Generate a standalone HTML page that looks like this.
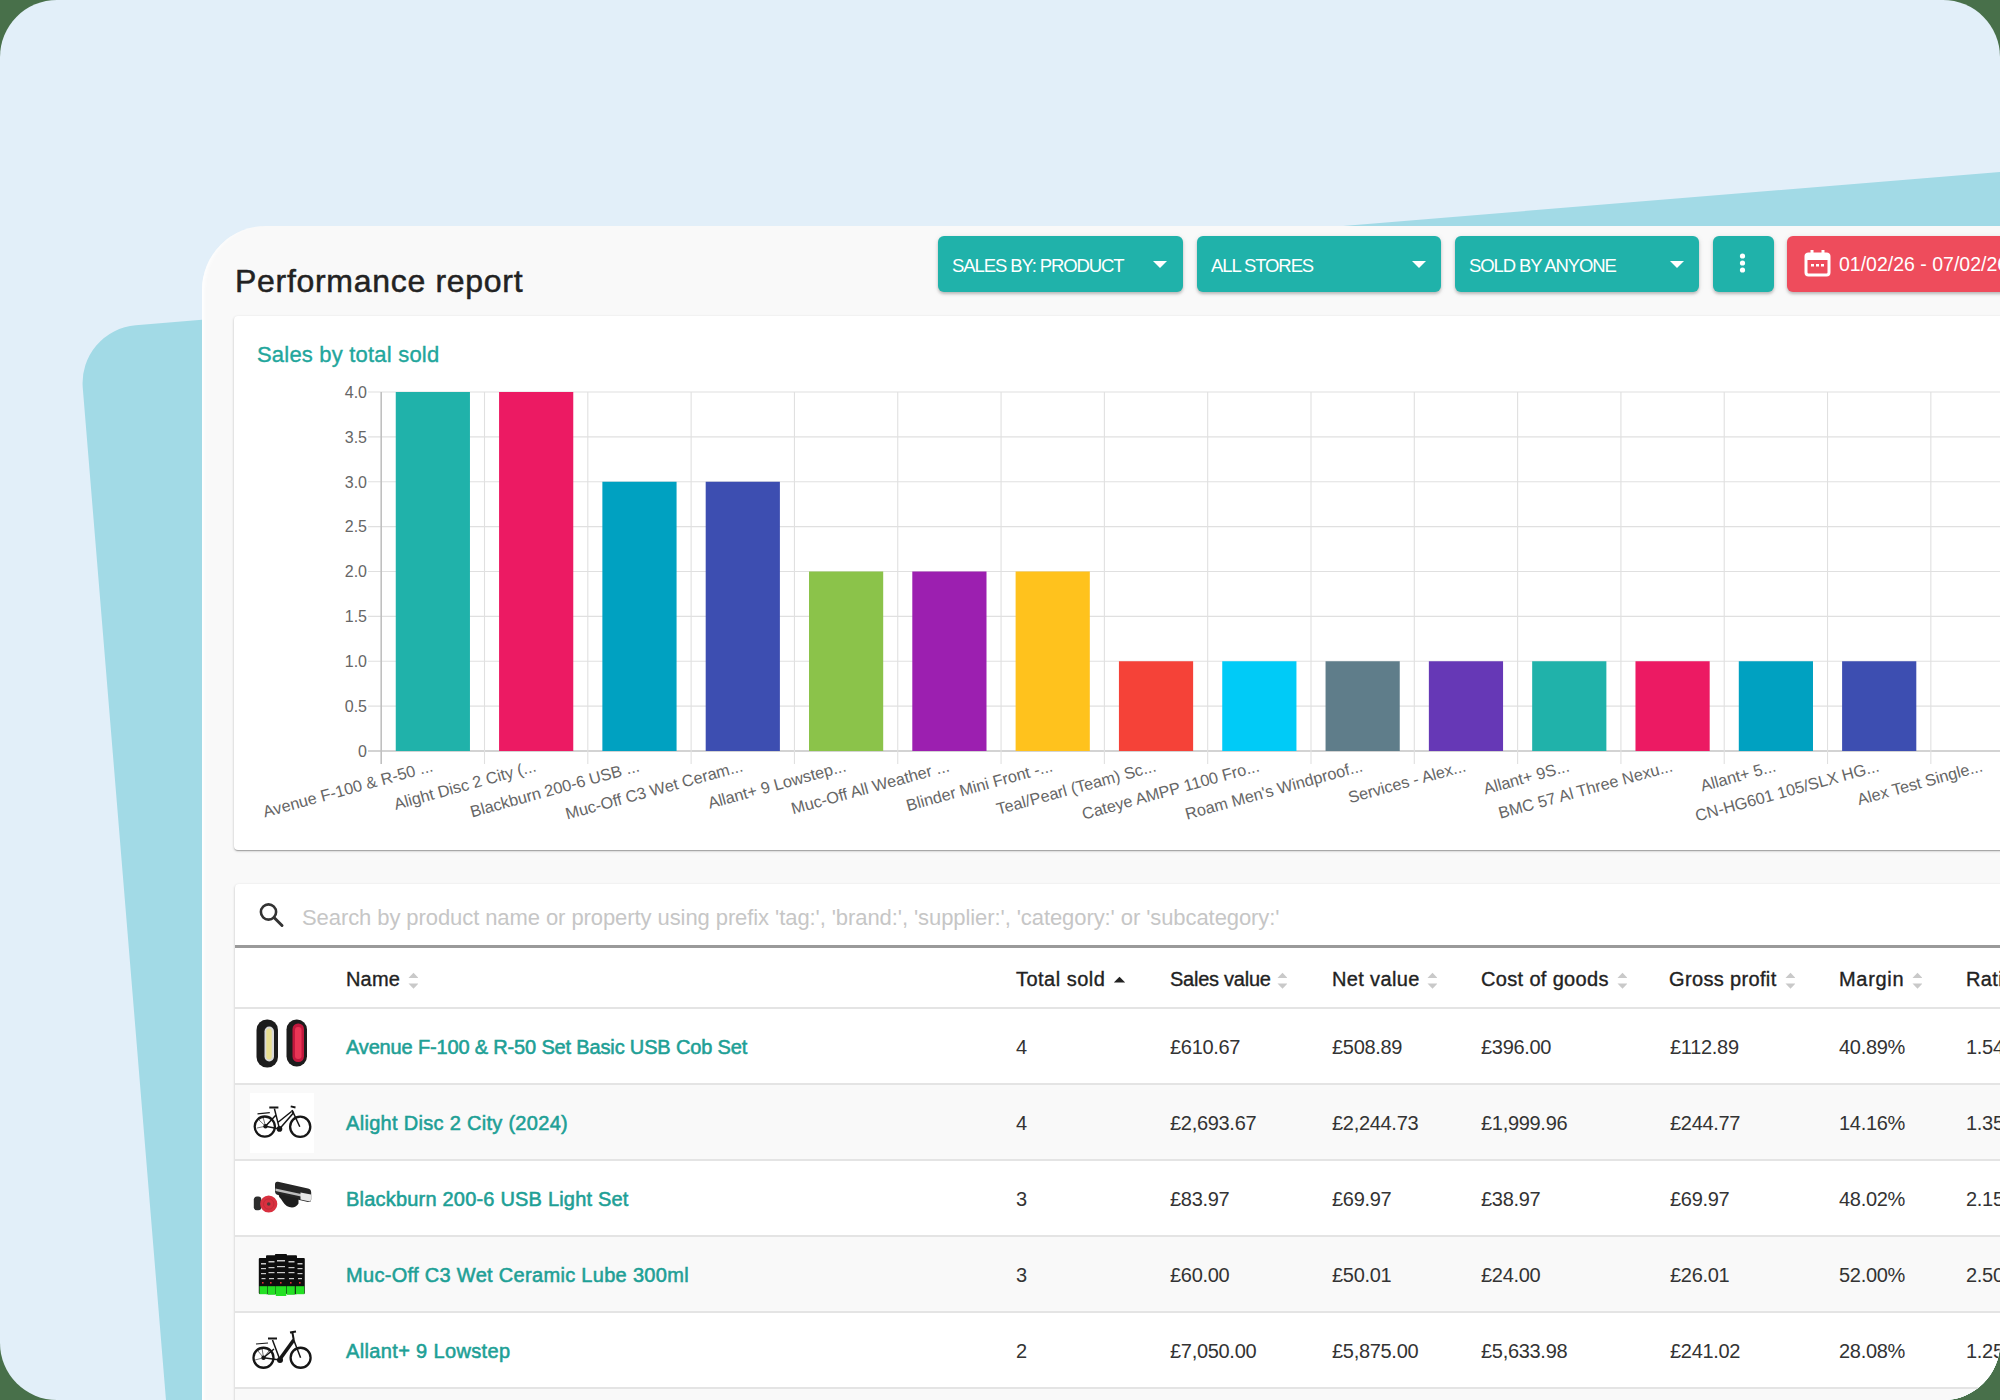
<!DOCTYPE html>
<html><head><meta charset="utf-8">
<style>
html,body{margin:0;padding:0;}
body{width:2000px;height:1400px;overflow:hidden;background:#48704A;font-family:"Liberation Sans",sans-serif;position:relative;}
#frame{position:absolute;left:0;top:0;width:2000px;height:1400px;border-radius:57px;background:#E2EFF9;overflow:hidden;}
#teal{position:absolute;left:77.7px;top:330px;width:2600px;height:2000px;background:#A2DAE6;border-radius:58px;transform-origin:0 0;transform:rotate(-4.7deg);}
#main{position:absolute;left:202px;top:226px;width:1900px;height:1300px;background:#F9F9F9;border-top-left-radius:64px;box-shadow:inset 5px 0 4px -3px #fff;}
.t{position:absolute;white-space:nowrap;line-height:1;}
.btn{position:absolute;top:236px;height:56px;background:#20B2AA;border-radius:6px;box-shadow:0 2px 3px rgba(0,0,0,.22),0 1px 6px rgba(0,0,0,.08);}
.btn .lbl{position:absolute;color:#fff;font-size:18.5px;letter-spacing:-1.1px;top:20.5px;white-space:nowrap;line-height:18.5px;}
.btn .car{position:absolute;top:25px;width:0;height:0;border-left:7px solid transparent;border-right:7px solid transparent;border-top:7px solid #fff;}
#chartcard{position:absolute;left:234px;top:316px;width:1900px;height:534px;background:#fff;border-radius:4px;box-shadow:0 1px 3px 0 rgba(0,0,0,.2),0 1px 1px 0 rgba(0,0,0,.14),0 2px 1px -1px rgba(0,0,0,.12);}
#tablecard{position:absolute;left:235px;top:884px;width:1900px;height:700px;background:#fff;border-radius:4px;box-shadow:0 1px 3px 0 rgba(0,0,0,.2),0 1px 1px 0 rgba(0,0,0,.14),0 2px 1px -1px rgba(0,0,0,.12);overflow:hidden;}
.row{position:absolute;left:0;width:1900px;height:78px;border-top:2px solid #E4E4E4;box-sizing:border-box;}
.cell{position:absolute;font-size:20px;color:#333;white-space:nowrap;line-height:20px;letter-spacing:-0.3px;}
.name{color:#1EA096;-webkit-text-stroke:0.55px #1EA096;}
.hd{position:absolute;font-size:20px;color:#222;white-space:nowrap;line-height:20px;letter-spacing:0.45px;-webkit-text-stroke:0.35px #222;}
.sort{position:absolute;width:10px;height:17px;}
</style></head>
<body>
<div id="frame">
  <div id="teal"></div>
  <div id="main"></div>
  <div class="t" style="left:235px;top:265px;font-size:32px;color:#222;letter-spacing:0.7px;-webkit-text-stroke:0.5px #222;">Performance report</div>

  <div class="btn" style="left:938px;width:245px;"><div class="lbl" style="left:14px;">SALES BY: PRODUCT</div><div class="car" style="left:215px;"></div></div>
  <div class="btn" style="left:1197px;width:244px;"><div class="lbl" style="left:14px;">ALL STORES</div><div class="car" style="left:215px;"></div></div>
  <div class="btn" style="left:1455px;width:244px;"><div class="lbl" style="left:14px;">SOLD BY ANYONE</div><div class="car" style="left:215px;"></div></div>
  <div class="btn" style="left:1713px;width:61px;">
    <svg width="61" height="56" style="position:absolute;left:0;top:0"><circle cx="29.5" cy="20" r="2.6" fill="#fff"/><circle cx="29.5" cy="27" r="2.6" fill="#fff"/><circle cx="29.5" cy="34" r="2.6" fill="#fff"/></svg>
  </div>
  <div class="btn" style="left:1787px;width:300px;background:#EE4C5C;">
    <svg width="30" height="30" style="position:absolute;left:17px;top:13px" viewBox="0 0 30 30"><rect x="2" y="5" width="23" height="21" rx="2.5" fill="none" stroke="#fff" stroke-width="3"/><rect x="2" y="5" width="23" height="6" fill="#fff"/><rect x="6.5" y="1" width="3" height="6" fill="#fff"/><rect x="17.5" y="1" width="3" height="6" fill="#fff"/><rect x="7" y="15" width="3" height="2.5" fill="#fff"/><rect x="12" y="15" width="3" height="2.5" fill="#fff"/><rect x="17" y="15" width="3" height="2.5" fill="#fff"/></svg>
    <div class="lbl" style="left:52px;letter-spacing:0px;font-size:19.5px;top:19.3px;">01/02/26 - 07/02/26</div>
  </div>

  <div id="chartcard"></div>
  <div class="t" style="left:257px;top:343.5px;font-size:22px;color:#22A69C;letter-spacing:0.2px;-webkit-text-stroke:0.35px #22A69C;">Sales by total sold</div>
  <svg id="chart" width="2000" height="1400" style="position:absolute;left:0;top:0;font-family:'Liberation Sans',sans-serif">
<line x1="368" y1="751.00" x2="2000" y2="751.00" stroke="#C4C4C4" stroke-width="1.6"/>
<text x="367" y="756.80" text-anchor="end" font-size="16" fill="#666">0</text>
<line x1="368" y1="706.12" x2="2000" y2="706.12" stroke="#E0E0E0" stroke-width="1.1"/>
<text x="367" y="711.92" text-anchor="end" font-size="16" fill="#666">0.5</text>
<line x1="368" y1="661.25" x2="2000" y2="661.25" stroke="#E0E0E0" stroke-width="1.1"/>
<text x="367" y="667.05" text-anchor="end" font-size="16" fill="#666">1.0</text>
<line x1="368" y1="616.38" x2="2000" y2="616.38" stroke="#E0E0E0" stroke-width="1.1"/>
<text x="367" y="622.17" text-anchor="end" font-size="16" fill="#666">1.5</text>
<line x1="368" y1="571.50" x2="2000" y2="571.50" stroke="#E0E0E0" stroke-width="1.1"/>
<text x="367" y="577.30" text-anchor="end" font-size="16" fill="#666">2.0</text>
<line x1="368" y1="526.62" x2="2000" y2="526.62" stroke="#E0E0E0" stroke-width="1.1"/>
<text x="367" y="532.42" text-anchor="end" font-size="16" fill="#666">2.5</text>
<line x1="368" y1="481.75" x2="2000" y2="481.75" stroke="#E0E0E0" stroke-width="1.1"/>
<text x="367" y="487.55" text-anchor="end" font-size="16" fill="#666">3.0</text>
<line x1="368" y1="436.88" x2="2000" y2="436.88" stroke="#E0E0E0" stroke-width="1.1"/>
<text x="367" y="442.68" text-anchor="end" font-size="16" fill="#666">3.5</text>
<line x1="368" y1="392.00" x2="2000" y2="392.00" stroke="#E0E0E0" stroke-width="1.1"/>
<text x="367" y="397.80" text-anchor="end" font-size="16" fill="#666">4.0</text>
<line x1="381.20" y1="392.0" x2="381.20" y2="764" stroke="#C0C0C0" stroke-width="1.6"/>
<line x1="484.51" y1="392.0" x2="484.51" y2="764" stroke="#E0E0E0" stroke-width="1.1"/>
<line x1="587.82" y1="392.0" x2="587.82" y2="764" stroke="#E0E0E0" stroke-width="1.1"/>
<line x1="691.13" y1="392.0" x2="691.13" y2="764" stroke="#E0E0E0" stroke-width="1.1"/>
<line x1="794.44" y1="392.0" x2="794.44" y2="764" stroke="#E0E0E0" stroke-width="1.1"/>
<line x1="897.75" y1="392.0" x2="897.75" y2="764" stroke="#E0E0E0" stroke-width="1.1"/>
<line x1="1001.06" y1="392.0" x2="1001.06" y2="764" stroke="#E0E0E0" stroke-width="1.1"/>
<line x1="1104.37" y1="392.0" x2="1104.37" y2="764" stroke="#E0E0E0" stroke-width="1.1"/>
<line x1="1207.68" y1="392.0" x2="1207.68" y2="764" stroke="#E0E0E0" stroke-width="1.1"/>
<line x1="1310.99" y1="392.0" x2="1310.99" y2="764" stroke="#E0E0E0" stroke-width="1.1"/>
<line x1="1414.30" y1="392.0" x2="1414.30" y2="764" stroke="#E0E0E0" stroke-width="1.1"/>
<line x1="1517.61" y1="392.0" x2="1517.61" y2="764" stroke="#E0E0E0" stroke-width="1.1"/>
<line x1="1620.92" y1="392.0" x2="1620.92" y2="764" stroke="#E0E0E0" stroke-width="1.1"/>
<line x1="1724.23" y1="392.0" x2="1724.23" y2="764" stroke="#E0E0E0" stroke-width="1.1"/>
<line x1="1827.54" y1="392.0" x2="1827.54" y2="764" stroke="#E0E0E0" stroke-width="1.1"/>
<line x1="1930.85" y1="392.0" x2="1930.85" y2="764" stroke="#E0E0E0" stroke-width="1.1"/>
<line x1="2034.16" y1="392.0" x2="2034.16" y2="764" stroke="#E0E0E0" stroke-width="1.1"/>
<rect x="395.75" y="392.00" width="74.2" height="359.00" fill="#20B2AA"/>
<rect x="499.06" y="392.00" width="74.2" height="359.00" fill="#EC1A63"/>
<rect x="602.37" y="481.75" width="74.2" height="269.25" fill="#00A1C1"/>
<rect x="705.69" y="481.75" width="74.2" height="269.25" fill="#3D4EB1"/>
<rect x="809.00" y="571.50" width="74.2" height="179.50" fill="#8BC34A"/>
<rect x="912.30" y="571.50" width="74.2" height="179.50" fill="#9C1FB0"/>
<rect x="1015.61" y="571.50" width="74.2" height="179.50" fill="#FFC21D"/>
<rect x="1118.93" y="661.25" width="74.2" height="89.75" fill="#F54238"/>
<rect x="1222.24" y="661.25" width="74.2" height="89.75" fill="#00CBF7"/>
<rect x="1325.55" y="661.25" width="74.2" height="89.75" fill="#5F7D8A"/>
<rect x="1428.86" y="661.25" width="74.2" height="89.75" fill="#6638B6"/>
<rect x="1532.17" y="661.25" width="74.2" height="89.75" fill="#20B2AA"/>
<rect x="1635.48" y="661.25" width="74.2" height="89.75" fill="#EC1A63"/>
<rect x="1738.79" y="661.25" width="74.2" height="89.75" fill="#00A1C1"/>
<rect x="1842.10" y="661.25" width="74.2" height="89.75" fill="#3D4EB1"/>
<text transform="translate(433.86 771) rotate(-15.4)" text-anchor="end" font-size="16.3" fill="#666">Avenue F-100 &amp; R-50 ...</text>
<text transform="translate(537.16 771) rotate(-15.4)" text-anchor="end" font-size="16.3" fill="#666">Alight Disc 2 City (...</text>
<text transform="translate(640.47 771) rotate(-15.4)" text-anchor="end" font-size="16.3" fill="#666">Blackburn 200-6 USB ...</text>
<text transform="translate(743.79 771) rotate(-15.4)" text-anchor="end" font-size="16.3" fill="#666">Muc-Off C3 Wet Ceram...</text>
<text transform="translate(847.10 771) rotate(-15.4)" text-anchor="end" font-size="16.3" fill="#666">Allant+ 9 Lowstep...</text>
<text transform="translate(950.40 771) rotate(-15.4)" text-anchor="end" font-size="16.3" fill="#666">Muc-Off All Weather ...</text>
<text transform="translate(1053.71 771) rotate(-15.4)" text-anchor="end" font-size="16.3" fill="#666">Blinder Mini Front -...</text>
<text transform="translate(1157.03 771) rotate(-15.4)" text-anchor="end" font-size="16.3" fill="#666">Teal/Pearl (Team) Sc...</text>
<text transform="translate(1260.34 771) rotate(-15.4)" text-anchor="end" font-size="16.3" fill="#666">Cateye AMPP 1100 Fro...</text>
<text transform="translate(1363.64 771) rotate(-15.4)" text-anchor="end" font-size="16.3" fill="#666">Roam Men's Windproof...</text>
<text transform="translate(1466.96 771) rotate(-15.4)" text-anchor="end" font-size="16.3" fill="#666">Services - Alex...</text>
<text transform="translate(1570.27 771) rotate(-15.4)" text-anchor="end" font-size="16.3" fill="#666">Allant+ 9S...</text>
<text transform="translate(1673.58 771) rotate(-15.4)" text-anchor="end" font-size="16.3" fill="#666">BMC 57 Al Three Nexu...</text>
<text transform="translate(1776.88 771) rotate(-15.4)" text-anchor="end" font-size="16.3" fill="#666">Allant+ 5...</text>
<text transform="translate(1880.20 771) rotate(-15.4)" text-anchor="end" font-size="16.3" fill="#666">CN-HG601 105/SLX HG...</text>
<text transform="translate(1983.51 771) rotate(-15.4)" text-anchor="end" font-size="16.3" fill="#666">Alex Test Single...</text>
</svg>

  <div id="tablecard">
    <svg width="30" height="30" style="position:absolute;left:22px;top:17px" viewBox="0 0 30 30"><circle cx="11.5" cy="11" r="7.6" fill="none" stroke="#333" stroke-width="2.6"/><line x1="17" y1="16.5" x2="25" y2="24.5" stroke="#333" stroke-width="3" stroke-linecap="round"/></svg>
    <div class="t" style="left:67px;top:23px;font-size:22px;color:#C6C6C6;line-height:22px;letter-spacing:-0.08px;">Search by product name or property using prefix 'tag:', 'brand:', 'supplier:', 'category:' or 'subcategory:'</div>
    <div style="position:absolute;left:0;top:61px;width:1900px;height:2.5px;background:#9A9A9A;"></div>
<div class="hd" style="left:111px;top:85px;letter-spacing:0.16px">Name</div>
<svg class="sort" style="left:173px;top:88px" width="12" height="17"><path d="M0.5 6 L5.5 0.8 L10.5 6 Z" fill="#C9C9C9"/><path d="M0.5 11.5 L5.5 16.7 L10.5 11.5 Z" fill="#C9C9C9"/></svg>
<div class="hd" style="left:781px;top:85px;letter-spacing:0.48px">Total sold</div>
<svg style="position:absolute;left:878px;top:92px" width="14" height="8"><path d="M0.8 6.5 L6.5 0.8 L12.2 6.5 Z" fill="#222"/></svg>
<div class="hd" style="left:935px;top:85px;letter-spacing:-0.25px">Sales value</div>
<svg class="sort" style="left:1042px;top:88px" width="12" height="17"><path d="M0.5 6 L5.5 0.8 L10.5 6 Z" fill="#C9C9C9"/><path d="M0.5 11.5 L5.5 16.7 L10.5 11.5 Z" fill="#C9C9C9"/></svg>
<div class="hd" style="left:1097px;top:85px;letter-spacing:0.35px">Net value</div>
<svg class="sort" style="left:1192px;top:88px" width="12" height="17"><path d="M0.5 6 L5.5 0.8 L10.5 6 Z" fill="#C9C9C9"/><path d="M0.5 11.5 L5.5 16.7 L10.5 11.5 Z" fill="#C9C9C9"/></svg>
<div class="hd" style="left:1246px;top:85px;letter-spacing:0.34px">Cost of goods</div>
<svg class="sort" style="left:1382px;top:88px" width="12" height="17"><path d="M0.5 6 L5.5 0.8 L10.5 6 Z" fill="#C9C9C9"/><path d="M0.5 11.5 L5.5 16.7 L10.5 11.5 Z" fill="#C9C9C9"/></svg>
<div class="hd" style="left:1434px;top:85px;letter-spacing:0.35px">Gross profit</div>
<svg class="sort" style="left:1550px;top:88px" width="12" height="17"><path d="M0.5 6 L5.5 0.8 L10.5 6 Z" fill="#C9C9C9"/><path d="M0.5 11.5 L5.5 16.7 L10.5 11.5 Z" fill="#C9C9C9"/></svg>
<div class="hd" style="left:1604px;top:85px;letter-spacing:0.7px">Margin</div>
<svg class="sort" style="left:1677px;top:88px" width="12" height="17"><path d="M0.5 6 L5.5 0.8 L10.5 6 Z" fill="#C9C9C9"/><path d="M0.5 11.5 L5.5 16.7 L10.5 11.5 Z" fill="#C9C9C9"/></svg>
<div class="hd" style="left:1731px;top:85px;letter-spacing:0.4px">Ratio</div>
<div class="row" style="top:123px;background:#FFFFFF"></div>
<div style="position:absolute;left:15px;top:133px;width:64px;height:60px;"><svg width="64" height="60" viewBox="0 0 64 60"><rect x="6.5" y="2.5" width="21.5" height="48" rx="10.5" fill="#1c1c1c"/><rect x="14.5" y="9.5" width="9.5" height="35" rx="4.7" fill="#d9d9d9"/><rect x="16.3" y="11.5" width="5.4" height="31" rx="2.7" fill="#E8DE90"/><rect x="36.5" y="2.5" width="20.5" height="47" rx="10" fill="#1c1c1c"/><rect x="42.5" y="6.5" width="11.5" height="38.5" rx="5.5" fill="#C0183D"/><rect x="45" y="10" width="6.5" height="32" rx="3" fill="#E83555"/></svg>
</div>
<div class="cell name" style="left:111px;top:153px;letter-spacing:-0.16px">Avenue F-100 &amp; R-50 Set Basic USB Cob Set</div>
<div class="cell" style="left:781px;top:153px;letter-spacing:-0.3px">4</div>
<div class="cell" style="left:935px;top:153px;letter-spacing:-0.3px">£610.67</div>
<div class="cell" style="left:1097px;top:153px;letter-spacing:-0.3px">£508.89</div>
<div class="cell" style="left:1246px;top:153px;letter-spacing:-0.3px">£396.00</div>
<div class="cell" style="left:1435px;top:153px;letter-spacing:-0.3px">£112.89</div>
<div class="cell" style="left:1604px;top:153px;letter-spacing:-0.3px">40.89%</div>
<div class="cell" style="left:1731px;top:153px;letter-spacing:-0.3px">1.54</div>
<div class="row" style="top:199px;background:#F9F9F9"></div>
<div style="position:absolute;left:15px;top:209px;width:64px;height:60px;">
<svg width="64" height="60" viewBox="0 0 64 60"><rect x="0" y="-2" width="65" height="62" fill="#fff"/><g fill="none" stroke="#161616"><circle cx="14.8" cy="33.6" r="10.1" stroke-width="2.3"/><circle cx="50.2" cy="33.8" r="10.1" stroke-width="2.3"/><path d="M15.5 33.2 L29.5 35.9 L43.4 19.9 L49.8 33.8 M29.5 35.9 L24.4 15.6 M27.8 29.5 L41.5 18.5 M26 22 L15.5 33.2" stroke-width="1.5"/><path d="M19.3 14.5 L28.4 14.5 M40.7 13.4 L45.5 14.5 M41.8 17.2 L43.4 19.9" stroke-width="2"/><path d="M7.5 20.9 L19.8 19.6" stroke-width="1.2"/><path d="M15.5 33.2 L9 27 M15.5 33.2 L13 24 M15.5 33.2 L21 27 M15.5 33.2 L7 35" stroke-width="0.6"/></g><circle cx="29.5" cy="35.9" r="2.8" fill="#161616"/><circle cx="15.5" cy="33.2" r="2.2" fill="#161616"/></svg>
</div>
<div class="cell name" style="left:111px;top:229px;letter-spacing:0.3px">Alight Disc 2 City (2024)</div>
<div class="cell" style="left:781px;top:229px;letter-spacing:-0.3px">4</div>
<div class="cell" style="left:935px;top:229px;letter-spacing:-0.3px">£2,693.67</div>
<div class="cell" style="left:1097px;top:229px;letter-spacing:-0.3px">£2,244.73</div>
<div class="cell" style="left:1246px;top:229px;letter-spacing:-0.3px">£1,999.96</div>
<div class="cell" style="left:1435px;top:229px;letter-spacing:-0.3px">£244.77</div>
<div class="cell" style="left:1604px;top:229px;letter-spacing:-0.3px">14.16%</div>
<div class="cell" style="left:1731px;top:229px;letter-spacing:-0.3px">1.35</div>
<div class="row" style="top:275px;background:#FFFFFF"></div>
<div style="position:absolute;left:15px;top:285px;width:64px;height:60px;">
<svg width="64" height="60" viewBox="0 0 64 60"><path d="M28 12.8 L58 19.5 Q61.2 20.2 61.2 23.5 L61.2 30.5 Q61.2 33.6 58 33 L28 26 Q25 25.3 25 22 L25 15.5 Q25 12.2 28 12.8 Z" fill="#262626"/><path d="M25.5 19.5 L51 25 L51 27.5 L25.5 22 Z" fill="#bdbdbd"/><path d="M50.5 23.5 L61 25.5 L61 30.5 Q61 32.8 58.5 32.3 L50.5 30.5 Z" fill="#e6e6e6"/><path d="M28.5 24.5 L38 27 L48.5 29.5 L48.5 34.5 Q46 38.5 42 38.5 Q36 38 33 33 L31 30 Q28.5 28 28.5 24.5 Z" fill="#1e1e1e"/><rect x="3.8" y="27.6" width="7.5" height="13.7" rx="3" fill="#2d2d2d"/><circle cx="18.7" cy="35" r="8.6" fill="#D9303F"/><circle cx="18.7" cy="35" r="5.2" fill="none" stroke="#c22a38" stroke-width="1"/><circle cx="18.7" cy="35" r="1.8" fill="#5a3a3a"/></svg>
</div>
<div class="cell name" style="left:111px;top:305px;letter-spacing:0.2px">Blackburn 200-6 USB Light Set</div>
<div class="cell" style="left:781px;top:305px;letter-spacing:-0.3px">3</div>
<div class="cell" style="left:935px;top:305px;letter-spacing:-0.3px">£83.97</div>
<div class="cell" style="left:1097px;top:305px;letter-spacing:-0.3px">£69.97</div>
<div class="cell" style="left:1246px;top:305px;letter-spacing:-0.3px">£38.97</div>
<div class="cell" style="left:1435px;top:305px;letter-spacing:-0.3px">£69.97</div>
<div class="cell" style="left:1604px;top:305px;letter-spacing:-0.3px">48.02%</div>
<div class="cell" style="left:1731px;top:305px;letter-spacing:-0.3px">2.15</div>
<div class="row" style="top:351px;background:#F9F9F9"></div>
<div style="position:absolute;left:15px;top:361px;width:64px;height:60px;">
<svg width="64" height="60" viewBox="0 0 64 60"><g fill="#0e0e0e"><rect x="8.8" y="13" width="9.4" height="36" rx="1"/><rect x="45.4" y="13" width="9.4" height="36" rx="1"/><rect x="16" y="10.2" width="10.5" height="39" rx="1"/><rect x="36.5" y="10.2" width="10.5" height="39" rx="1"/><rect x="24.9" y="9.1" width="12.1" height="40" rx="1"/></g><g fill="#24E024"><rect x="9.5" y="41.2" width="8" height="8"/><rect x="18" y="41.2" width="7.5" height="8.5"/><rect x="25.8" y="41.2" width="10.5" height="9.8"/><rect x="36.8" y="41.2" width="8" height="8.5"/><rect x="45.8" y="41.2" width="8.5" height="8"/></g><g fill="#c8c8c8"><rect x="11" y="18" width="5" height="1.5"/><rect x="18.5" y="16" width="6" height="1.5"/><rect x="27" y="15" width="8" height="1.5"/><rect x="38.5" y="16" width="6" height="1.5"/><rect x="47.5" y="18" width="5" height="1.5"/><rect x="11" y="23" width="5" height="1.2"/><rect x="18.5" y="22" width="6" height="1.2"/><rect x="27" y="21" width="8" height="1.2"/><rect x="38.5" y="22" width="6" height="1.2"/><rect x="47.5" y="23" width="5" height="1.2"/><rect x="11" y="28" width="5" height="1.2"/><rect x="18.5" y="27" width="6" height="1.2"/><rect x="27" y="27" width="8" height="1.2"/><rect x="38.5" y="27" width="6" height="1.2"/><rect x="47.5" y="28" width="5" height="1.2"/><rect x="11.5" y="33" width="4" height="1.2"/><rect x="19" y="33" width="5" height="1.2"/><rect x="27.5" y="33" width="7" height="1.2"/><rect x="39" y="33" width="5" height="1.2"/><rect x="48" y="33" width="4" height="1.2"/></g><g fill="#d33"><rect x="12" y="37" width="1.6" height="1.6"/><rect x="20" y="37" width="1.6" height="1.6"/><rect x="30" y="37" width="1.6" height="1.6"/><rect x="40" y="37" width="1.6" height="1.6"/><rect x="49" y="37" width="1.6" height="1.6"/></g></svg>
</div>
<div class="cell name" style="left:111px;top:381px;letter-spacing:0.31px">Muc-Off C3 Wet Ceramic Lube 300ml</div>
<div class="cell" style="left:781px;top:381px;letter-spacing:-0.3px">3</div>
<div class="cell" style="left:935px;top:381px;letter-spacing:-0.3px">£60.00</div>
<div class="cell" style="left:1097px;top:381px;letter-spacing:-0.3px">£50.01</div>
<div class="cell" style="left:1246px;top:381px;letter-spacing:-0.3px">£24.00</div>
<div class="cell" style="left:1435px;top:381px;letter-spacing:-0.3px">£26.01</div>
<div class="cell" style="left:1604px;top:381px;letter-spacing:-0.3px">52.00%</div>
<div class="cell" style="left:1731px;top:381px;letter-spacing:-0.3px">2.50</div>
<div class="row" style="top:427px;background:#FFFFFF"></div>
<div style="position:absolute;left:15px;top:437px;width:64px;height:60px;">
<svg width="64" height="60" viewBox="0 0 64 60"><g fill="none" stroke="#161616"><circle cx="13.5" cy="36.75" r="10" stroke-width="2.3"/><circle cx="50.6" cy="36.75" r="10" stroke-width="2.3"/><path d="M13.5 36.75 L30 39 M30 39 L22.5 19 M24 28 L13.5 36.75 M43.75 19 L50.6 36.75" stroke-width="1.5"/><path d="M30 38 L43.75 19" stroke-width="3.6"/><path d="M18 17.5 L27 17.5 M40 11.5 L46 10.5 M42.5 12 L43.75 19" stroke-width="2"/><path d="M6 23 L18 22" stroke-width="1.2"/><path d="M13.5 36.75 L8 30 M13.5 36.75 L12 27 M13.5 36.75 L19 30 M13.5 36.75 L5 39" stroke-width="0.6"/></g><circle cx="30" cy="39" r="3" fill="#161616"/><circle cx="13.5" cy="36.75" r="2.2" fill="#161616"/></svg>
</div>
<div class="cell name" style="left:111px;top:457px;letter-spacing:0.35px">Allant+ 9 Lowstep</div>
<div class="cell" style="left:781px;top:457px;letter-spacing:-0.3px">2</div>
<div class="cell" style="left:935px;top:457px;letter-spacing:-0.3px">£7,050.00</div>
<div class="cell" style="left:1097px;top:457px;letter-spacing:-0.3px">£5,875.00</div>
<div class="cell" style="left:1246px;top:457px;letter-spacing:-0.3px">£5,633.98</div>
<div class="cell" style="left:1435px;top:457px;letter-spacing:-0.3px">£241.02</div>
<div class="cell" style="left:1604px;top:457px;letter-spacing:-0.3px">28.08%</div>
<div class="cell" style="left:1731px;top:457px;letter-spacing:-0.3px">1.25</div>
<div class="row" style="top:503px;background:#F9F9F9"></div>
  </div>
</div>
</body></html>
